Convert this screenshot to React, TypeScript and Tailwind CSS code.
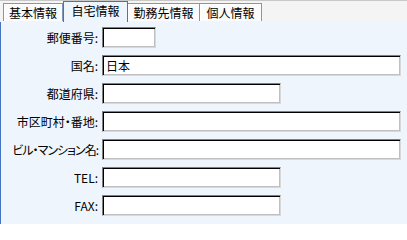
import React from "react";

const font = {
  fontFamily: '"Noto Sans CJK JP", "Noto Sans", sans-serif',
};

function Field({
  label,
  w,
  value,
  tight,
}: {
  label: string;
  w: string;
  value?: string;
  tight?: boolean;
}) {
  return (
    <div className="flex h-[21px] items-center">
      <div
        className={`w-[97px] shrink-0 text-right text-[12px] leading-none text-black whitespace-nowrap [font-feature-settings:'palt'] ${
          tight ? "tracking-[-1px]" : ""
        }`}
      >
        {label}
      </div>
      <div
        className={`ml-[4px] h-[21px] ${w} border border-t-[#808080] border-l-[#808080] border-b-[#d8d8d8] border-r-[#d8d8d8] bg-white shadow-[inset_1px_1px_0_#000,inset_-1px_-1px_0_#c0c0c0] flex items-center pl-[3px] text-[12px] leading-none text-black`}
      >
        {value}
      </div>
    </div>
  );
}

export default function App() {
  return (
    <div className="w-[407px] h-[224px] bg-white overflow-hidden flex flex-col" style={font}>
      <div className="h-[22px] shrink-0 flex items-end pl-[3px] border-t border-t-[#c8c8c8] bg-[#f4f4f4] relative z-10">
        <div className="w-[60px] h-[18px] mb-px border border-b-0 border-[#8098b8] bg-[#fbfbfb] shadow-[inset_1px_1px_0_#ffffff] flex items-center justify-center text-[12px] leading-none text-black">
          基本情報
        </div>
        <div className="w-[65px] h-[21px] border border-b-0 border-[#4573c4] bg-[#eef5fd] flex items-center justify-center text-[12px] leading-none text-black pb-[2px]">
          自宅情報
        </div>
        <div className="w-[72px] h-[18px] mb-px border border-b-0 border-l-0 border-[#8098b8] bg-[#fbfbfb] shadow-[inset_1px_1px_0_#ffffff] flex items-center justify-center text-[12px] leading-none text-black">
          勤務先情報
        </div>
        <div className="w-[62px] h-[18px] mb-px border border-b-0 border-l-0 border-[#8098b8] bg-[#fbfbfb] shadow-[inset_1px_1px_0_#ffffff] flex items-center justify-center text-[12px] leading-none text-black">
          個人情報
        </div>
      </div>
      <div className="-mt-px flex-1 border-t border-l border-[#4573c4] bg-[#eef5fd] pt-[5px] flex flex-col gap-[7px]">
        <Field label="郵便番号:" w="w-[54px]" />
        <Field label="国名:" w="w-[299px]" value="日本" />
        <Field label="都道府県:" w="w-[179px]" />
        <Field label="市区町村・番地:" w="w-[299px]" />
        <Field label="ビル・マンション名:" w="w-[299px]" tight />
        <Field label="TEL:" w="w-[179px]" />
        <Field label="FAX:" w="w-[179px]" />
      </div>
    </div>
  );
}
